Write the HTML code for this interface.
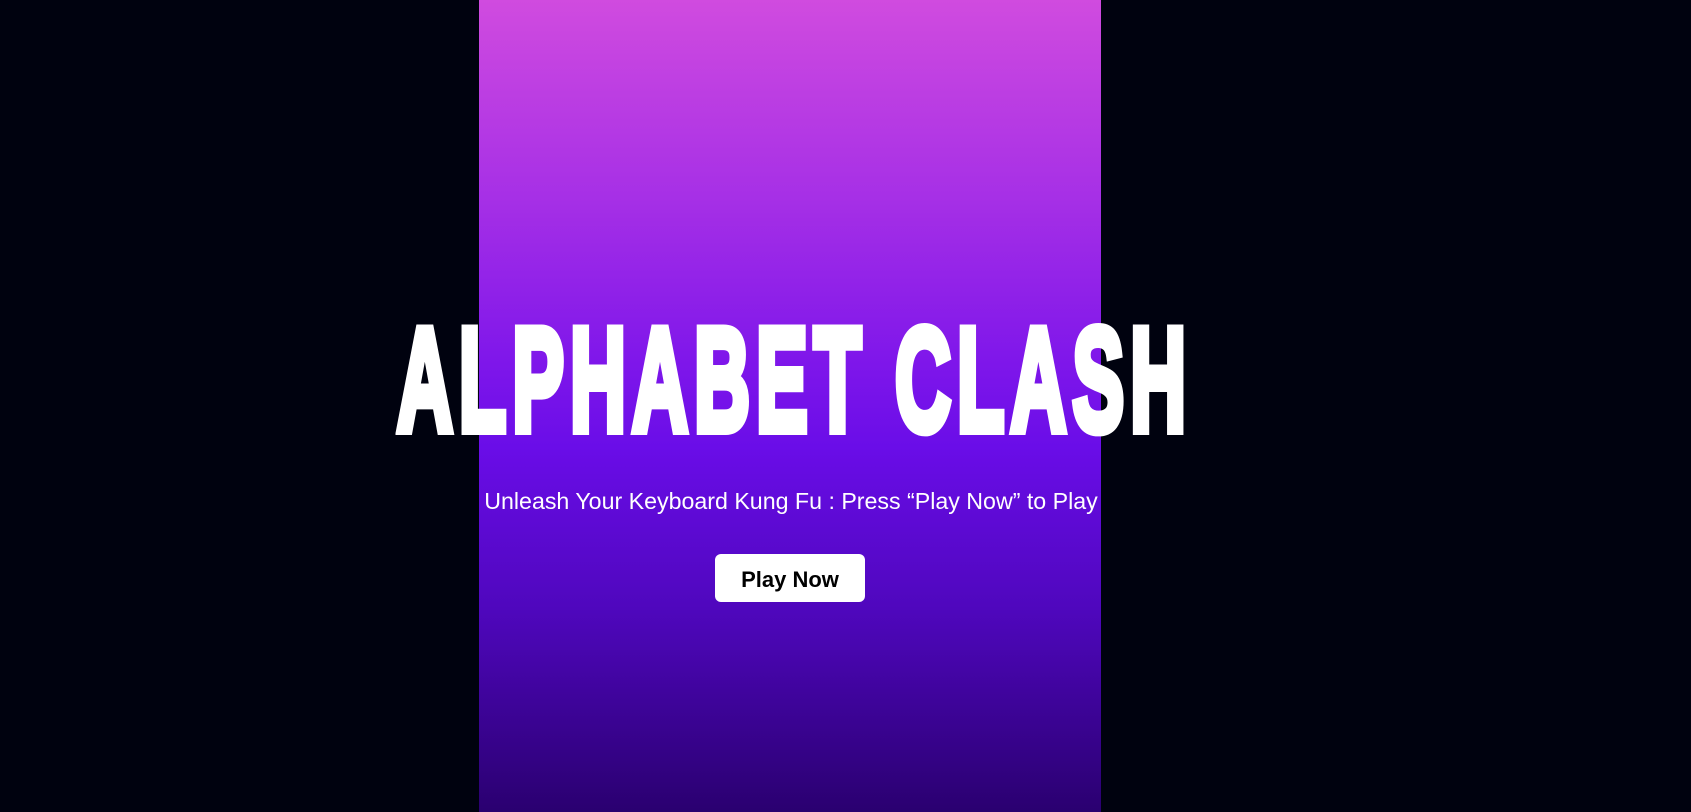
<!DOCTYPE html>
<html><head><style>
html,body{margin:0;padding:0}
body{width:1691px;height:812px;background:#00020f;position:relative;overflow:hidden;font-family:"Liberation Sans",sans-serif}
.panel{position:absolute;left:479px;top:0;width:622px;height:812px;background:linear-gradient(180deg,#d04bdf 0%,#a52fe6 25%,#7e16ea 45%,#6a0de8 55%,#4f07bd 75%,#2a0070 100%)}
.title{position:absolute;left:397px;top:307px;font-weight:bold;font-size:146px;line-height:146px;color:#fff;white-space:nowrap;transform:scaleX(0.528);transform-origin:0 0;-webkit-text-stroke:10px #fff;letter-spacing:12px}
.sub{position:absolute;left:440px;width:702px;top:488px;text-align:center;color:#fff;font-size:23.2px;white-space:nowrap}
.btn{position:absolute;left:715px;top:554px;width:150px;height:48px;background:#fff;border-radius:6px;color:#000;font-size:22px;font-weight:bold;text-align:center;line-height:52px}
</style></head><body>
<div class="panel"></div>
<div class="title">ALPHABET CLASH</div>
<div class="sub">Unleash Your Keyboard Kung Fu : Press “Play Now” to Play</div>
<div class="btn">Play Now</div>
</body></html>
